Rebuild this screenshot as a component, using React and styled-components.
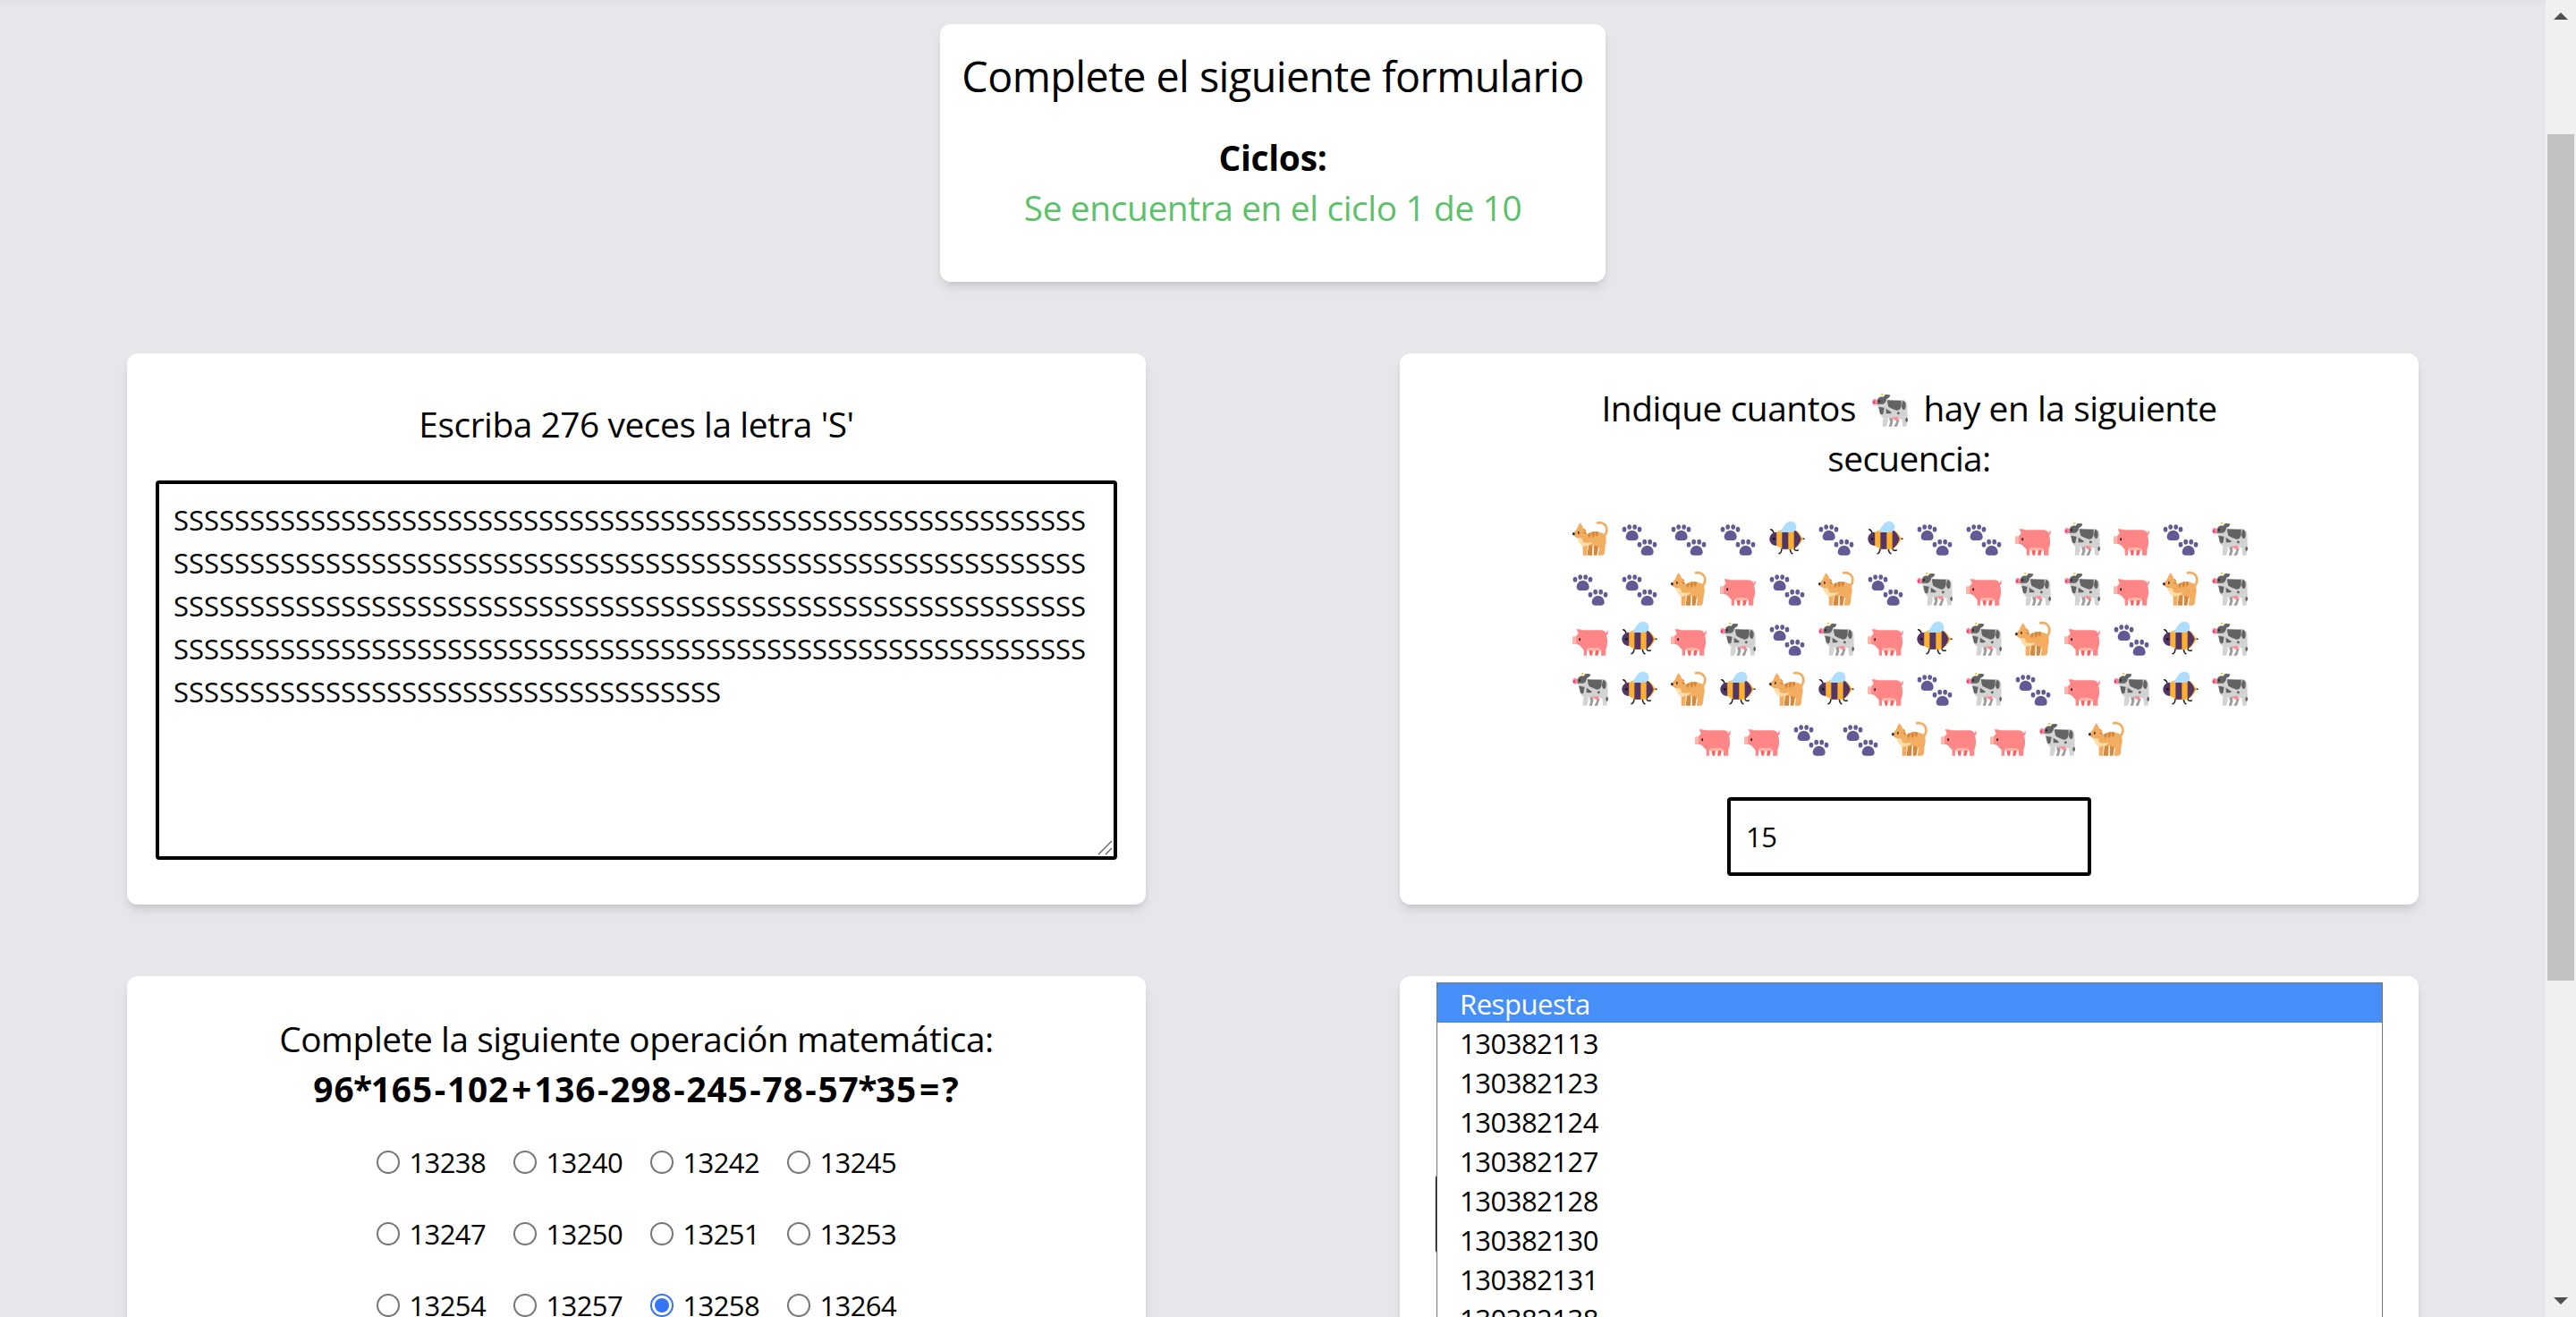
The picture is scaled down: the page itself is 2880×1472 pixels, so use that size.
import React from "react";
import styled, { createGlobalStyle } from "styled-components";

const GlobalStyle = createGlobalStyle`
  * { box-sizing: border-box; margin: 0; padding: 0; }
  body { background: #e5e7eb; overflow: hidden; }
  body, input, textarea, select {
    font-family: "Open Sans", "Noto Sans", sans-serif;
    color: #000;
  }
`;

const Screen = styled.div`
  display: flex;
  width: 2880px;
  height: 1472px;
  overflow: hidden;
`;

const Page = styled.main`
  width: 2846px;
  padding-top: 27px;
  display: flex;
  flex-direction: column;
  align-items: center;
  gap: 80px;
  overflow: hidden;
  background: linear-gradient(#e0e2e6, #e5e7eb 7px);
`;

const Card = styled.section`
  flex: none;
  display: flex;
  flex-direction: column;
  align-items: center;
  background: #fff;
  border-radius: 12px;
  box-shadow: 0 8px 12px -2px rgba(0, 0, 0, 0.1), 0 4px 8px -2px rgba(0, 0, 0, 0.06);
`;

const IntroCard = styled(Card)`
  width: 744px;
  height: 288px;
  padding-top: 26px;
`;

const Row = styled.div`
  flex: none;
  display: flex;
  justify-content: space-around;
  width: 100%;
`;

const TaskCard = styled(Card)`
  position: relative;
  width: 40%;
  height: 616px;
  padding-top: ${(p) => p.$top}px;
`;

const Heading = styled.h1`
  font-size: 46.6px;
  font-weight: 400;
  line-height: 64px;
  letter-spacing: -0.52px;
  margin-bottom: 31px;
  white-space: nowrap;
`;

const Line = styled.p`
  font-size: 38.8px;
  font-weight: ${(p) => (p.$bold ? 700 : 400)};
  line-height: 56px;
  letter-spacing: ${(p) => p.$track ?? -0.42}px;
  color: ${(p) => p.$color || "#000"};
  white-space: nowrap;
`;

const Operator = styled.span`
  margin: 0 ${(p) => p.$space}px;
  letter-spacing: 0;
`;

const AreaWrap = styled.div`
  position: relative;
  width: 1075px;
  height: 424px;
  margin-top: 35px;
`;

const Area = styled.textarea`
  display: block;
  width: 100%;
  height: 100%;
  padding: 16px 16px;
  border: 4px solid #000;
  border-radius: 4px;
  outline: none;
  resize: none;
  overflow: hidden;
  font-size: 31px;
  line-height: 48px;
`;

const Grip = styled.svg`
  position: absolute;
  right: 5px;
  bottom: 5px;
  width: 17px;
  height: 17px;
`;

const Sequence = styled.div`
  display: flex;
  flex-direction: column;
  align-items: center;
  gap: 16px;
  margin: 42px 0 45px 2px;
`;

const SequenceRow = styled.div`
  display: flex;
  gap: 15px;
  height: 40px;
`;

const Emoji = styled.svg`
  display: block;
  width: 40px;
  height: 40px;
`;

const InlineEmoji = styled(Emoji)`
  display: inline-block;
  vertical-align: -7px;
  margin: 0 8px;
`;

const Field = styled.input`
  width: 407px;
  height: 88px;
  padding: 0 17px;
  border: 4px solid #000;
  border-radius: 4px;
  outline: none;
  font-size: 31px;
  letter-spacing: -0.4px;
`;

const Choices = styled.div`
  display: grid;
  grid-template-columns: repeat(4, 153px);
  grid-auto-rows: 80px;
  margin: 14px 0 0 32px;
`;

const Choice = styled.label`
  display: flex;
  align-items: center;
  gap: 10px;
  font-size: 31px;
  letter-spacing: -0.6px;
`;

const Radio = styled.input`
  appearance: none;
  flex: none;
  display: grid;
  place-items: center;
  width: 26px;
  height: 26px;
  border: 2px solid #767676;
  border-radius: 50%;
  background: #fff;

  &:checked { border-color: #3375f6; }
  &:checked::before {
    content: "";
    width: 16px;
    height: 16px;
    border-radius: 50%;
    background: #3375f6;
  }
`;

const Select = styled.div`
  position: relative;
  width: 1059px;
  height: 88px;
  border: 4px solid #000;
  border-radius: 4px;
`;

const Menu = styled.ul`
  position: absolute;
  top: -219px;
  left: -3px;
  width: 1058px;
  height: 700px;
  list-style: none;
  background: #fff;
  border: 1px solid #767676;
`;

const Option = styled.li`
  height: 44px;
  padding-left: 25px;
  font-size: 31px;
  line-height: 46px;
  letter-spacing: ${(p) => (p.$active ? -0.45 : -0.5)}px;
  color: ${(p) => (p.$active ? "#fff" : "#000")};
  background: ${(p) => (p.$active ? "#478ff8" : "#fff")};
`;

const Scrollbar = styled.aside`
  flex: none;
  display: flex;
  flex-direction: column;
  align-items: center;
  justify-content: space-between;
  width: 34px;
  height: 1472px;
  padding: 14px 0;
  background: #f0f0f0;
`;

const Track = styled.div`
  width: 30px;
  height: 1428px;
  padding-top: 128px;
`;

const Thumb = styled.div`
  height: 946px;
  background: #c1c1c1;
`;

const Arrow = styled.svg`
  flex: none;
  display: block;
  width: 16px;
  height: 8px;
  fill: #505050;
`;

const drawings = {
  cat: (
    <>
      <path d="M84 7C101 4 115 14 115 30C115 43 110 49 103 55" fill="none" stroke="#f3ad61" strokeWidth="8" strokeLinecap="round" />
      <path d="M54 80H68L66 116H50ZM72 82H88L82 116H71Z" fill="#d3883e" />
      <path d="M2 43L14 29Q20 16 25 7Q34 15 37 26Q47 31 48 46C60 39 70 35 84 36L108 44Q113 48 113 66Q113 76 110 84L108 108Q106 116 100 116H86L90 91L77 83H51L48 116H35V86Q20 72 17 58Q5 55 2 43Z" fill="#f3ad61" />
      <path d="M17 58H30Q36 61 36 72Q48 76 68 72Q60 82 49 84L35 86Q20 76 17 58Z" fill="#ffdea7" />
      <path d="M37 26Q45 28 46 35Q40 35 37 26ZM36 38Q42 36 48 44Q40 47 36 38ZM52 44L62 39Q64 49 57 58Q51 54 52 44ZM65 38L75 36Q77 48 70 57Q64 53 65 38ZM78 36L87 38Q88 49 81 54Q76 49 78 36Z" fill="#d3883e" />
      <ellipse cx="20.500" cy="40" rx="2.500" ry="5" fill="#352c22" />
      <ellipse cx="4" cy="44" rx="4" ry="5" fill="#212121" />
    </>
  ),
  paw: (
    <g fill="#635994">
      <path d="M35 32C47 32 56 43 56 54C56 62 51 66 44 66H26C19 66 14 62 14 54C14 43 23 32 35 32Z" />
      <path d="M86 83C98 83 107 94 107 105C107 113 102 116 95 116H77C70 116 65 113 65 105C65 94 74 83 86 83Z" />
      <ellipse cx="9" cy="29" rx="7" ry="8.500" />
      <ellipse cx="26" cy="21" rx="7" ry="8.500" />
      <ellipse cx="44" cy="21" rx="7" ry="8.500" />
      <ellipse cx="60" cy="29" rx="7" ry="8.500" />
      <ellipse cx="60" cy="80" rx="7" ry="8.500" />
      <ellipse cx="77" cy="71" rx="7" ry="8.500" />
      <ellipse cx="95" cy="71" rx="7" ry="8.500" />
      <ellipse cx="111" cy="80" rx="7" ry="8.500" />
    </g>
  ),
  bee: (
    <>
      <path d="M5 29Q14 31 15 42M42 94Q41 108 33 110M70 94Q71 108 78 110M84 94Q86 102 97 99M108 61H117" fill="none" stroke="#212121" strokeWidth="4.500" strokeLinecap="round" />
      <path d="M25 38L44 29H82L98 38L114 61L98 84L82 95H44L25 84Z" fill="#ffb02e" />
      <path d="M25 38C9 39 1 50 1 61C1 73 9 83 25 84ZM43 30H64V95H43ZM83 29Q101 41 107 61Q101 82 83 95Z" fill="#533566" />
      <path d="M36 39C45 28 51 3 72 2C86 2 93 14 91 25C89 36 80 39 70 39Z" fill="#aeddff" />
      <circle cx="16" cy="61" r="5" fill="#212121" />
    </>
  ),
  pig: (
    <>
      <path d="M55 98H69L66 116H59ZM77 98H90L85 116H76Z" fill="#ff5f5f" />
      <path d="M12 52L20 42L14 28Q25 26 34 31H96Q108 32 112 40Q116 41 115 34H119Q121 46 114 49Q118 62 117 78Q115 91 112 96V116H96V98H48V116H38V97L23 81L12 77Z" fill="#ff8687" />
      <path d="M48 97Q49 90 60 90H84Q93 90 97 101Q88 98 78 100H54Q48 100 48 97Z" fill="#ffb5a8" />
      <rect y="52" width="13" height="26" rx="3" fill="#ffb5a8" />
      <ellipse cx="24.500" cy="62" rx="2.800" ry="5" fill="#212121" />
    </>
  ),
  cow: (
    <>
      <path d="M57 88H70V100L66 116H56L61 101ZM80 92H92L88 104L84 116H73L82 100Z" fill="#9b9b9b" />
      <path d="M18 23Q32 7 42 23L60 27H98Q114 25 118 42L119 88L115 116H103L100 92Q88 88 76 87H53V99L48 116H35L37 88L27 76L18 44L10 42Q15 31 18 23Z" fill="#d3d3d3" />
      <path d="M21 22Q25 15 38 17L43 10Q55 8 61 11Q59 20 48 24Q47 37 37 41L17 41Q14 30 21 22ZM51 28Q76 30 98 29V45Q96 63 82 62Q67 57 55 50Q51 41 51 28ZM103 29Q113 32 113 44Q113 59 107 60Q100 59 99 47Q100 35 103 29ZM22 50L41 53L37 74Q29 79 26 70ZM47 56L66 69L62 73H47Z" fill="#636363" />
      <circle cx="88" cy="71" r="4.500" fill="#636363" />
      <ellipse cx="116" cy="94" rx="4" ry="8" fill="#636363" />
      <path d="M66 85H88V95Q78 98 74 92Z" fill="#ff8a95" />
      <ellipse cx="9" cy="34" rx="8" ry="10" fill="#ff8291" />
      <ellipse cx="6" cy="35" rx="3" ry="5" fill="#d8359b" />
      <ellipse cx="24" cy="31" rx="2.500" ry="4" fill="#212121" />
      <path d="M31 11L29 5L34 7L38 4L37 12Z" fill="#f9c23c" />
    </>
  ),
};

const Animal = ({ kind, inline }) => {
  const Box = inline ? InlineEmoji : Emoji;
  return <Box viewBox="0 0 120 120">{drawings[kind]}</Box>;
};

const sequence = [
  "cat paw paw paw bee paw bee paw paw pig cow pig paw cow",
  "paw paw cat pig paw cat paw cow pig cow cow pig cat cow",
  "pig bee pig cow paw cow pig bee cow cat pig paw bee cow",
  "cow bee cat bee cat bee pig paw cow paw pig cow bee cow",
  "pig pig paw paw cat pig pig cow cat",
].map((row) => row.split(" "));

/* Breathing room on each side of an operator, in pixels. */
const operatorSpace = { "-": 1.75, "+": 3, "=": 3, "*": -1.4 };

const expression = "96*165-102+136-298-245-78-57*35=?".split(/([-+*=])/);

const answers = [13238, 13240, 13242, 13245, 13247, 13250, 13251, 13253, 13254, 13257, 13258, 13264];

const options = [
  "Respuesta", "130382113", "130382123", "130382124", "130382127",
  "130382128", "130382130", "130382131", "130382138",
];

export default function App() {
  return (
    <Screen>
      <GlobalStyle />
      <Page>
        <IntroCard>
          <Heading>Complete el siguiente formulario</Heading>
          <Line $bold $track={-0.25}>Ciclos:</Line>
          <Line $color="#5cc26a" $track={-0.35}>Se encuentra en el ciclo 1 de 10</Line>
        </IntroCard>

        <Row>
          <TaskCard $top={51}>
            <Line>Escriba 276 veces la letra 'S'</Line>
            <AreaWrap>
              <Area readOnly spellCheck={false} value={"S".repeat(276)} />
              <Grip viewBox="0 0 17 17" stroke="#5f5f5f" strokeWidth="1.300">
                <path d="M1 16L16 1M9 16L16 9" />
              </Grip>
            </AreaWrap>
          </TaskCard>

          <TaskCard $top={33}>
            <Line>
              Indique cuantos <Animal kind="cow" inline /> hay en la siguiente
            </Line>
            <Line $track={-0.6}>secuencia:</Line>
            <Sequence>
              {sequence.map((row, r) => (
                <SequenceRow key={r}>
                  {row.map((kind, i) => <Animal key={i} kind={kind} />)}
                </SequenceRow>
              ))}
            </Sequence>
            <Field readOnly value="15" />
          </TaskCard>
        </Row>

        <Row>
          <TaskCard $top={42}>
            <Line>Complete la siguiente operación matemática:</Line>
            <Line $bold $track={0.85}>
              {expression.map((part, i) =>
                part in operatorSpace
                  ? <Operator key={i} $space={operatorSpace[part]}>{part}</Operator>
                  : part
              )}
            </Line>
            <Choices>
              {answers.map((n) => (
                <Choice key={n}>
                  <Radio type="radio" name="resultado" checked={n === 13258} readOnly />
                  {n}
                </Choice>
              ))}
            </Choices>
          </TaskCard>

          <TaskCard $top={222}>
            <Select>
              <Menu>
                {options.map((o, i) => <Option key={o} $active={i === 0}>{o}</Option>)}
              </Menu>
            </Select>
          </TaskCard>
        </Row>
      </Page>

      <Scrollbar>
        <Arrow viewBox="0 0 16 8"><path d="M8 0L16 8H0Z" /></Arrow>
        <Track><Thumb /></Track>
        <Arrow viewBox="0 0 16 8"><path d="M0 0H16L8 8Z" /></Arrow>
      </Scrollbar>
    </Screen>
  );
}
